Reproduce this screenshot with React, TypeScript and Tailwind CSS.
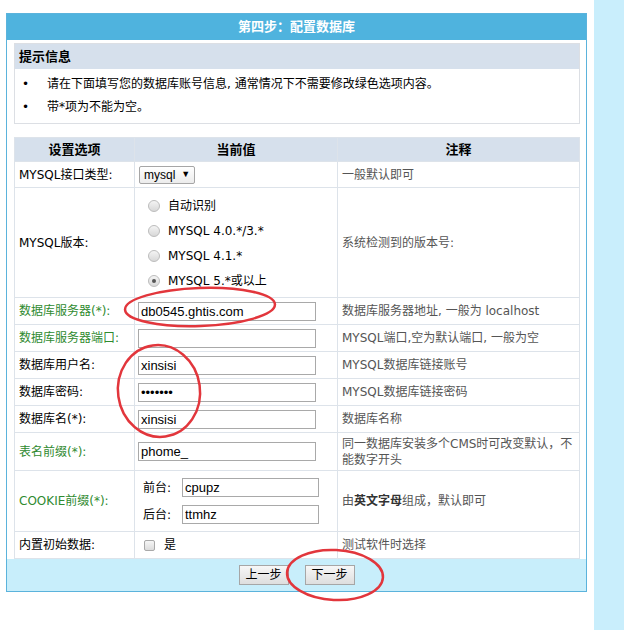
import React from "react";

const inputBase =
  "h-[19px] border border-[#a9a9a9] bg-white px-[2px] text-[13px] leading-[17px] text-black font-['Liberation_Sans','Noto_Sans_CJK_SC',sans-serif] outline-none";
const inputCls = `${inputBase} w-[178px]`;

function Radio({ checked, label }: { checked?: boolean; label: string }) {
  return (
    <div className="flex h-[25px] items-center gap-[8px]">
      <span className="flex h-[12px] w-[12px] items-center justify-center rounded-full border border-[#bdbdbd] bg-gradient-to-b from-[#f4f4f4] to-[#d8d8d8]">
        {checked && <span className="h-[4px] w-[4px] rounded-full bg-[#555]" />}
      </span>
      <span>{label}</span>
    </div>
  );
}

function Row({
  label,
  green,
  h,
  note,
  children,
}: {
  label: string;
  green?: boolean;
  h: string;
  note: React.ReactNode;
  children: React.ReactNode;
}) {
  return (
    <tr>
      <td className={`${h} border border-[#dde3ea] pl-[4px] align-middle ${green ? "text-[#2f8a2f]" : "text-black"}`}>
        {label}
      </td>
      <td className="border border-[#dde3ea] pl-[3px] align-middle">{children}</td>
      <td className="border border-[#dde3ea] pl-[4px] pr-[4px] align-middle leading-[16px] text-[#555]">{note}</td>
    </tr>
  );
}

export default function App() {
  return (
    <div className="relative flex min-h-[630px] bg-white text-[12px] text-black font-['DejaVu_Sans','Noto_Sans_CJK_SC',sans-serif]">
      <div className="w-[594px] pl-[6px] pr-[7px] pt-[13px]">
        <div className="border border-[#5bb3dc] bg-white">
          {/* Header */}
          <div className="flex h-[26px] items-center justify-center bg-[#4fb3de] text-[13px] font-bold text-white">
            第四步：配置数据库
          </div>

          <div className="pl-[7px] pr-[6px] pt-[3px]">
            {/* Hint box */}
            <div className="border border-[#dcdfe4]">
              <div className="flex h-[25px] items-center bg-[#d6e0ec] pl-[4px] text-[13px] font-bold">提示信息</div>
              <div className="pb-[5px] pt-[3px]">
                <div className="flex h-[23px] items-center">
                  <span className="w-[32px] pl-[7px]">•</span>
                  <span>请在下面填写您的数据库账号信息, 通常情况下不需要修改绿色选项内容。</span>
                </div>
                <div className="flex h-[23px] items-center">
                  <span className="w-[32px] pl-[7px]">•</span>
                  <span>带*项为不能为空。</span>
                </div>
              </div>
            </div>

            {/* Settings table */}
            <table className="mt-[13px] w-full table-fixed border-collapse">
              <colgroup>
                <col className="w-[120px]" />
                <col className="w-[203px]" />
                <col />
              </colgroup>
              <thead>
                <tr className="bg-[#d6e0ec] text-[13px]">
                  <th className="h-[24px] border border-[#dde3ea] text-center font-bold">设置选项</th>
                  <th className="border border-[#dde3ea] text-center font-bold">当前值</th>
                  <th className="border border-[#dde3ea] text-center font-bold">注释</th>
                </tr>
              </thead>
              <tbody>
                <Row label="MYSQL接口类型:" h="h-[26px]" note="一般默认即可">
                  <span className="ml-[1px] inline-flex h-[18px] items-center gap-[6px] rounded-[2px] border border-[#a6a6a6] bg-gradient-to-b from-white to-[#ececec] px-[4px] font-['Liberation_Sans',sans-serif] text-[12px]">
                    mysql <span className="text-[9px]">▼</span>
                  </span>
                </Row>
                <Row label="MYSQL版本:" h="h-[110px]" note="系统检测到的版本号:">
                  <div className="pl-[10px] pt-[2px]">
                    <Radio label="自动识别" />
                    <Radio label="MYSQL 4.0.*/3.*" />
                    <Radio label="MYSQL 4.1.*" />
                    <Radio checked label="MYSQL 5.*或以上" />
                  </div>
                </Row>
                <Row label="数据库服务器(*):" green h="h-[27px]" note="数据库服务器地址, 一般为 localhost">
                  <input className={inputCls} defaultValue="db0545.ghtis.com" />
                </Row>
                <Row label="数据库服务器端口:" green h="h-[27px]" note="MYSQL端口,空为默认端口, 一般为空">
                  <input className={inputCls} defaultValue="" />
                </Row>
                <Row label="数据库用户名:" h="h-[27px]" note="MYSQL数据库链接账号">
                  <input className={inputCls} defaultValue="xinsisi" />
                </Row>
                <Row label="数据库密码:" h="h-[27px]" note="MYSQL数据库链接密码">
                  <input type="password" className={inputCls} defaultValue="1234567" />
                </Row>
                <Row label="数据库名(*):" h="h-[27px]" note="数据库名称">
                  <input
                    className={`${inputBase} w-[178px] border-[#7ea6d6]`}
                    defaultValue="xinsisi"
                  />
                </Row>
                <Row
                  label="表名前缀(*):"
                  green
                  h="h-[38px]"
                  note={
                    <>
                      同一数据库安装多个CMS时可改变默认，不
                      <br />
                      能数字开头
                    </>
                  }
                >
                  <input className={inputCls} defaultValue="phome_" />
                </Row>
                <Row
                  label="COOKIE前缀(*):"
                  green
                  h="h-[61px]"
                  note={
                    <>
                      由<b className="text-[#333]">英文字母</b>组成，默认即可
                    </>
                  }
                >
                  <div className="flex flex-col gap-[8px] pl-[5px]">
                    <div className="flex items-center">
                      <span className="w-[39px] shrink-0 whitespace-nowrap">前台:</span>
                      <input className={`${inputBase} w-[137px]`} defaultValue="cpupz" />
                    </div>
                    <div className="flex items-center">
                      <span className="w-[39px] shrink-0 whitespace-nowrap">后台:</span>
                      <input className={`${inputBase} w-[137px]`} defaultValue="ttmhz" />
                    </div>
                  </div>
                </Row>
                <Row label="内置初始数据:" h="h-[27px]" note="测试软件时选择">
                  <div className="flex items-center gap-[9px] pl-[6px]">
                    <span className="h-[11px] w-[11px] rounded-[2px] border border-[#a9a9a9] bg-gradient-to-b from-[#f6f6f6] to-[#dcdcdc]" />
                    <span>是</span>
                  </div>
                </Row>
              </tbody>
            </table>
          </div>

          {/* Footer buttons */}
          <div className="flex h-[32px] items-center justify-center gap-[16px] bg-[#c8eefb]">
            <button className="h-[20px] w-[50px] border border-[#a6a6a6] bg-gradient-to-b from-[#f7f7f7] to-[#dedede] text-[12px]">
              上一步
            </button>
            <button className="h-[20px] w-[50px] border border-[#a6a6a6] bg-gradient-to-b from-[#f7f7f7] to-[#dedede] text-[12px]">
              下一步
            </button>
          </div>
        </div>
      </div>
      <div className="flex-1 bg-[#c9eefc]" />

      {/* Red annotation ellipses */}
      <svg className="pointer-events-none absolute left-0 top-0" width="624" height="630" viewBox="0 0 624 630">
        <ellipse cx="200" cy="307" rx="75" ry="19" fill="none" stroke="#e2363c" strokeWidth="2.5" transform="rotate(-2 200 307)" />
        <ellipse cx="159" cy="391" rx="41" ry="46" fill="none" stroke="#e2363c" strokeWidth="2.5" transform="rotate(-8 159 391)" />
        <ellipse cx="335" cy="575" rx="48" ry="25" fill="none" stroke="#e2363c" strokeWidth="2.5" transform="rotate(3 335 575)" />
      </svg>
    </div>
  );
}
